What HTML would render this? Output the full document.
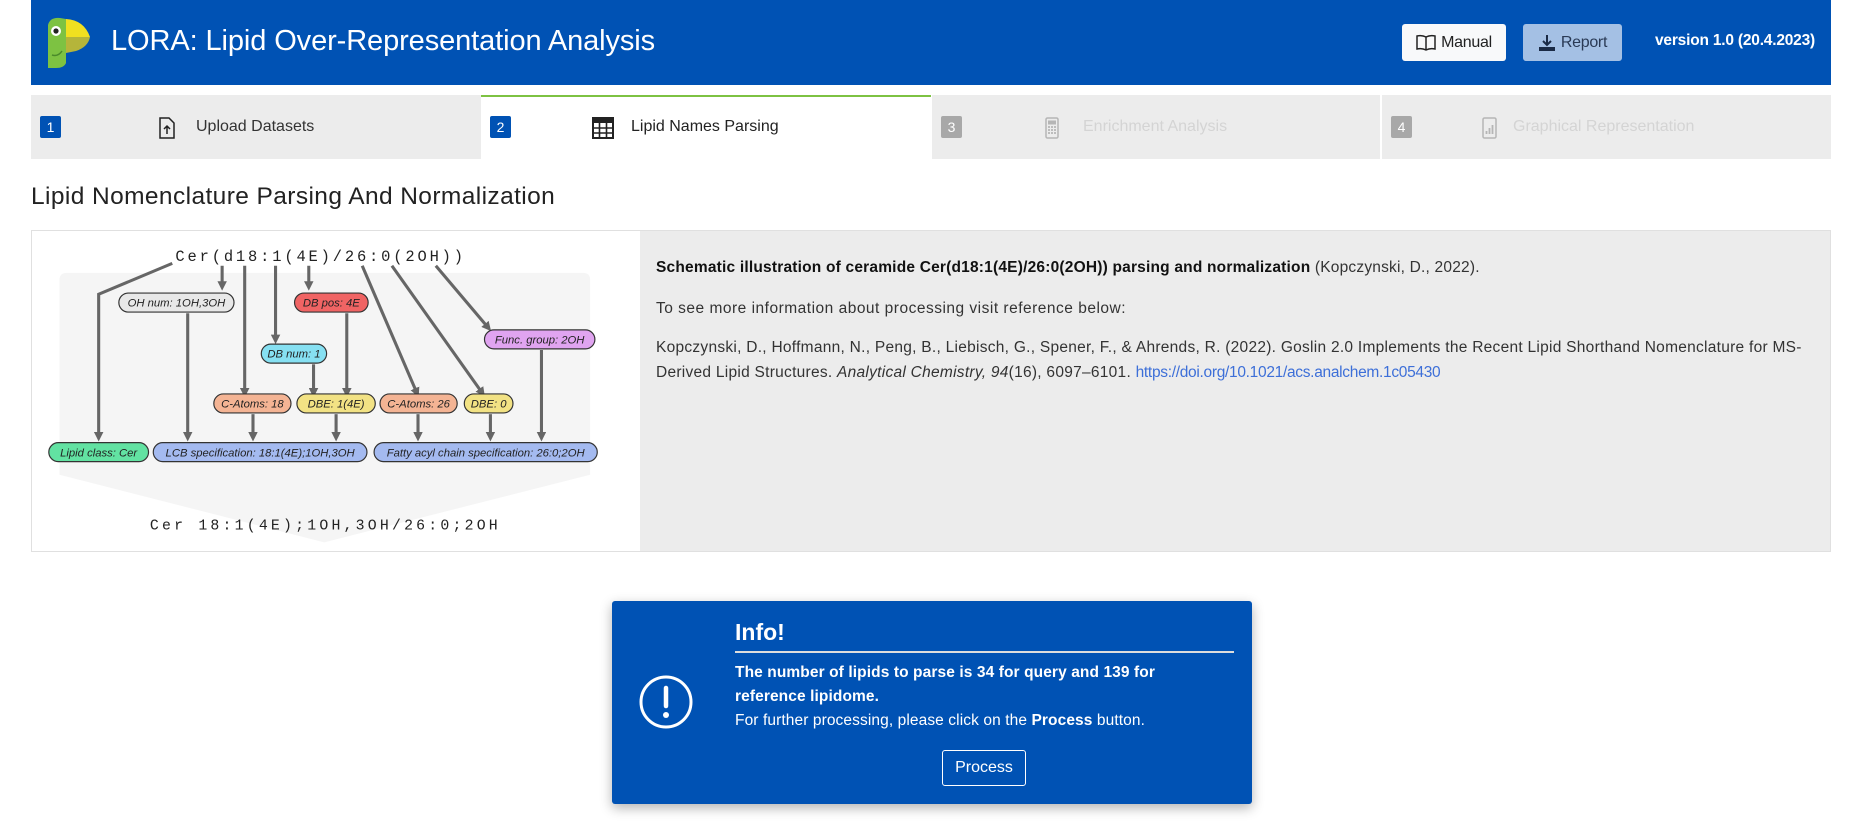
<!DOCTYPE html>
<html><head><meta charset="utf-8"><style>
*{box-sizing:border-box;margin:0;padding:0}
body{width:1863px;height:840px;background:#fff;font-family:"Liberation Sans",sans-serif;color:#222;position:relative;overflow:hidden}
.abs{position:absolute}
.hdr{left:31px;top:0;width:1800px;height:85px;background:#0052b4}
.title{left:111px;top:25px;color:#fff;font-size:29px;letter-spacing:-0.1px}
.btn{top:24px;height:37px;border-radius:3px;font-size:16px;display:flex;align-items:center;justify-content:center;gap:5px;letter-spacing:-0.3px}
.tab{top:95px;height:64px;background:#ececec;font-size:16px;letter-spacing:0px}
.badge{position:absolute;left:9px;top:21px;width:21px;height:22px;color:#fff;font-size:14px;text-align:center;line-height:22px;border-radius:2px}
.tab .ic{position:absolute;top:22px}
.tab .tx{position:absolute;top:23px}
.rt{font-size:15.5px;color:#333;line-height:25px}
</style></head><body>
<div class="abs hdr"></div>
<svg class="abs" style="left:44px;top:17px" width="48" height="52" viewBox="0 0 48 52">
<path d="M4 8 Q6 0 16 1 L22 2 L22 46 Q20 51 12 51 L4 51 Z" fill="#7dc242"/>
<path d="M22 2 Q40 3 46 20 L22 20 Z" fill="#f0e020"/>
<path d="M22 20 L46 20 Q44 30 32 34 L22 36 Z" fill="#b5b53a"/>
<circle cx="12" cy="14" r="5" fill="#fff"/><circle cx="12" cy="14" r="2.6" fill="#222"/>
<path d="M8 38 Q14 40 18 34" stroke="#4a8a2a" stroke-width="1.5" fill="none"/>
</svg>
<div class="abs title">LORA: Lipid Over-Representation Analysis</div>
<div class="abs btn" style="left:1402px;width:104px;background:#f8f9fa;color:#222">
<svg width="20" height="17" viewBox="0 0 20 17"><path d="M10 3 Q6 1 1 2 V15 Q6 14 10 16 Q14 14 19 15 V2 Q14 1 10 3 Z M10 3 V16" stroke="#222" stroke-width="1.5" fill="none"/></svg>Manual</div>
<div class="abs btn" style="left:1523px;width:99px;background:#a4c0e4;color:#2a3a55">
<svg width="18" height="18" viewBox="0 0 18 18"><path d="M9 1 V11 M5 7 L9 11 L13 7" stroke="#1a2a45" stroke-width="2" fill="none"/><path d="M1 13 H17 V17 H1 Z" fill="#1a2a45"/></svg>Report</div>
<div class="abs" style="left:1655px;top:32px;color:#fff;font-size:15.5px;font-weight:bold;letter-spacing:-0.2px">version 1.0 (20.4.2023)</div>

<div class="abs tab" style="left:31px;width:450px">
<div class="badge" style="background:#0052b4">1</div>
<svg class="ic" style="left:128px" width="16" height="22" viewBox="0 0 16 22"><path d="M1 1 H10 L15 6 V21 H1 Z" stroke="#222" stroke-width="1.5" fill="none"/><path d="M8 17 V9 M5 12 L8 9 L11 12" stroke="#222" stroke-width="1.5" fill="none"/></svg>
<div class="tx" style="left:165px;color:#333">Upload Datasets</div></div>
<div class="abs tab" style="left:481px;width:450px;background:#fff;border-top:2px solid #7dc242">
<div class="badge" style="background:#0052b4;top:19px">2</div>
<svg class="ic" style="left:111px;top:20px" width="22" height="22" viewBox="0 0 22 22"><rect x="1" y="1" width="20" height="20" fill="none" stroke="#222" stroke-width="2"/><rect x="1" y="1" width="20" height="5" fill="#222"/><path d="M1 11 H21 M1 16 H21 M7.5 1 V21 M14.5 1 V21" stroke="#222" stroke-width="1.6"/></svg>
<div class="tx" style="left:150px;top:21px;color:#222">Lipid Names Parsing</div></div>
<div class="abs tab" style="left:932px;width:448px">
<div class="badge" style="background:#a8a8a8">3</div>
<svg class="ic" style="left:113px" width="14" height="22" viewBox="0 0 14 22"><rect x="1" y="1" width="12" height="20" rx="1.5" fill="none" stroke="#b5b5b5" stroke-width="1.5"/><rect x="3" y="3.5" width="8" height="4" fill="#b5b5b5"/><path d="M3 10h2M6 10h2M9 10h2M3 13h2M6 13h2M9 13h2M3 16h2M6 16h2M9 16h2" stroke="#b5b5b5" stroke-width="1.8"/></svg>
<div class="tx" style="left:151px;color:#d4d4d4">Enrichment Analysis</div></div>
<div class="abs tab" style="left:1382px;width:449px">
<div class="badge" style="background:#a8a8a8">4</div>
<svg class="ic" style="left:100px" width="15" height="22" viewBox="0 0 15 22"><rect x="1" y="1" width="13" height="20" rx="1.5" fill="none" stroke="#b5b5b5" stroke-width="1.5"/><path d="M4.5 17V14M7.5 17V11M10.5 17V8" stroke="#b5b5b5" stroke-width="1.8"/></svg>
<div class="tx" style="left:131px;color:#d4d4d4">Graphical Representation</div></div>

<div class="abs" style="left:31px;top:183px;font-size:24.5px;color:#222;letter-spacing:0.4px">Lipid Nomenclature Parsing And Normalization</div>

<div class="abs" style="left:31px;top:230px;width:1800px;height:322px;background:#ececec;border:1px solid #e0e0e0"></div>
<div class="abs" style="left:32px;top:231px;width:608px;height:320px;background:#fff"></div>
<svg class="abs" style="left:31px;top:230px" width="609" height="322" viewBox="26 194 513 271" font-family="Liberation Sans, sans-serif">
<defs><marker id="a" markerWidth="8" markerHeight="8" refX="4" refY="4" orient="auto" markerUnits="userSpaceOnUse" viewBox="0 0 8 8"><path d="M0 0 L8 4 L0 8 Z" fill="#666"/></marker></defs>
<path d="M50 236 Q50 230 56 230 H491 Q497 230 497 236 V400 L273 457 L50 400 Z" fill="#f5f5f5"/>
<text x="270" y="220" text-anchor="middle" font-family="Liberation Mono, monospace" font-size="13" letter-spacing="2.4" fill="#222">Cer(d18:1(4E)/26:0(2OH))</text>
<text x="274" y="446" text-anchor="middle" font-family="Liberation Mono, monospace" font-size="12.5" letter-spacing="2.7" fill="#222">Cer 18:1(4E);1OH,3OH/26:0;2OH</text>
<g stroke="#666" stroke-width="2.6" fill="none" marker-end="url(#a)">
<path d="M145 222 L83 248 L83 368"/>
<path d="M187 224 V241"/><path d="M206 224 V331"/><path d="M232 224 V286"/><path d="M260 224 V241"/>
<path d="M305 224 L351 331"/><path d="M330 224 L406 331"/><path d="M367 224 L411 276"/>
<path d="M158 264 V368"/><path d="M292 264 V331"/><path d="M264 307 V331"/>
<path d="M213 349 V368"/><path d="M283 349 V368"/><path d="M352 349 V368"/><path d="M413 349 V368"/><path d="M456 295 V368"/>
</g>
<g stroke="#333" stroke-width="1" font-size="9.5" font-style="italic" text-anchor="middle" fill="#222">
<rect x="100" y="247" width="97" height="16" rx="8" fill="#e8e8e8"/><text x="148.5" y="258.5" stroke="none">OH num: 1OH,3OH</text>
<rect x="248" y="247" width="62" height="16" rx="8" fill="#f06464"/><text x="279" y="258.5" stroke="none">DB pos: 4E</text>
<rect x="220" y="290" width="55" height="16" rx="8" fill="#86e0f2"/><text x="247.5" y="301.5" stroke="none">DB num: 1</text>
<rect x="408" y="278" width="93" height="16" rx="8" fill="#e0a4f0"/><text x="454.5" y="289.5" stroke="none">Func. group: 2OH</text>
<rect x="180" y="332" width="65" height="16" rx="8" fill="#f4b494"/><text x="212.5" y="343.5" stroke="none">C-Atoms: 18</text>
<rect x="250" y="332" width="66" height="16" rx="8" fill="#f2e284"/><text x="283" y="343.5" stroke="none">DBE: 1(4E)</text>
<rect x="320" y="332" width="65" height="16" rx="8" fill="#f4b494"/><text x="352.5" y="343.5" stroke="none">C-Atoms: 26</text>
<rect x="391" y="332" width="41" height="16" rx="8" fill="#f2e284"/><text x="411.5" y="343.5" stroke="none">DBE: 0</text>
<rect x="41" y="373" width="84" height="16" rx="8" fill="#62e2a2"/><text x="83" y="384.5" stroke="none">Lipid class: Cer</text>
<rect x="129" y="373" width="180" height="16" rx="8" fill="#a4baf0"/><text x="219" y="384.5" stroke="none">LCB specification: 18:1(4E);1OH,3OH</text>
<rect x="315" y="373" width="188" height="16" rx="8" fill="#a4baf0"/><text x="409" y="384.5" stroke="none">Fatty acyl chain specification: 26:0;2OH</text>
</g>
</svg>

<div class="abs rt" style="left:656px;top:255px;letter-spacing:0.2px"><b style="color:#111">Schematic illustration of ceramide Cer(d18:1(4E)/26:0(2OH)) parsing and normalization</b> (Kopczynski, D., 2022).</div>
<div class="abs rt" style="left:656px;top:296px;letter-spacing:0.5px">To see more information about processing visit reference below:</div>
<div class="abs rt" style="left:656px;top:335px;letter-spacing:0.27px">Kopczynski, D., Hoffmann, N., Peng, B., Liebisch, G., Spener, F., &amp; Ahrends, R. (2022). Goslin 2.0 Implements the Recent Lipid Shorthand Nomenclature for MS-<br>Derived Lipid Structures. <i>Analytical Chemistry, 94</i>(16), 6097–6101. <span style="color:#3d6fd8;letter-spacing:-0.3px">https://doi.org/10.1021/acs.analchem.1c05430</span></div>

<div class="abs" style="left:612px;top:601px;width:640px;height:203px;background:#0052b4;border-radius:3px;box-shadow:0 4px 12px rgba(0,0,0,0.3);color:#fff">
<svg class="abs" style="left:26px;top:73px" width="56" height="56" viewBox="0 0 56 56"><circle cx="28" cy="28" r="25" stroke="#fff" stroke-width="3" fill="none"/><path d="M28 14 V32" stroke="#fff" stroke-width="4.5" stroke-linecap="round"/><circle cx="28" cy="41" r="3" fill="#fff"/></svg>
<div class="abs" style="left:123px;top:18px;font-size:23px;font-weight:bold">Info!</div>
<div class="abs" style="left:123px;top:50px;width:499px;height:2px;background:#ddd"></div>
<div class="abs" style="left:123px;top:60px;font-size:15.5px;line-height:24px;letter-spacing:0.1px"><b>The number of lipids to parse is 34 for query and 139 for<br>reference lipidome.</b><br>For further processing, please click on the <b>Process</b> button.</div>
<div class="abs" style="left:330px;top:149px;width:84px;height:36px;border:1px solid #fff;border-radius:3px;font-size:16px;text-align:center;line-height:34px">Process</div>
</div>
</body></html>
